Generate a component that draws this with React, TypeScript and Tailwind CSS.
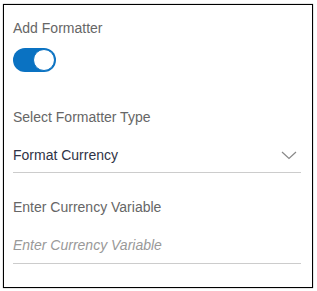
import React from "react";

const App: React.FC = () => {
  return (
    <div className="w-[317px] h-[291px] bg-white pt-1 pl-[3px] font-['Liberation_Sans',Arial,sans-serif]">
      <div className="w-[310px] h-[284px] border border-black shadow-[0_0_1px_rgba(0,0,0,0.6)] pl-[9px] pr-[11px] pt-[13px]">
        {/* Add formatter toggle */}
        <div className="text-sm leading-5 text-[#666]">Add Formatter</div>
        <button className="mt-[10px] w-[43px] h-6 rounded-full bg-[#0a72c2] flex items-center justify-end pr-[1px]">
          <span className="w-[22px] h-[22px] rounded-full bg-white border border-[#0a72c2]" />
        </button>

        {/* Formatter type select */}
        <div className="mt-[35px] text-sm leading-5 text-[#666]">Select Formatter Type</div>
        <div className="mt-[18px] flex items-center justify-between border-b border-[#ccc] pb-[7px]">
          <span className="text-sm leading-5 text-[#2f3346]">Format Currency</span>
          <svg width="16" height="9" viewBox="0 0 16 9" className="mr-[4px]">
            <path d="M1 1 L8 7.5 L15 1" fill="none" stroke="#888" strokeWidth="1.2" />
          </svg>
        </div>

        {/* Currency variable input */}
        <div className="mt-[24px] text-sm leading-5 text-[#666]">Enter Currency Variable</div>
        <div className="mt-[18px] border-b border-[#ccc] pb-[8px]">
          <input
            className="block w-full h-5 text-sm leading-5 italic text-[#333] placeholder:text-[#999] outline-none"
            placeholder="Enter Currency Variable"
          />
        </div>
      </div>
    </div>
  );
};

export default App;
